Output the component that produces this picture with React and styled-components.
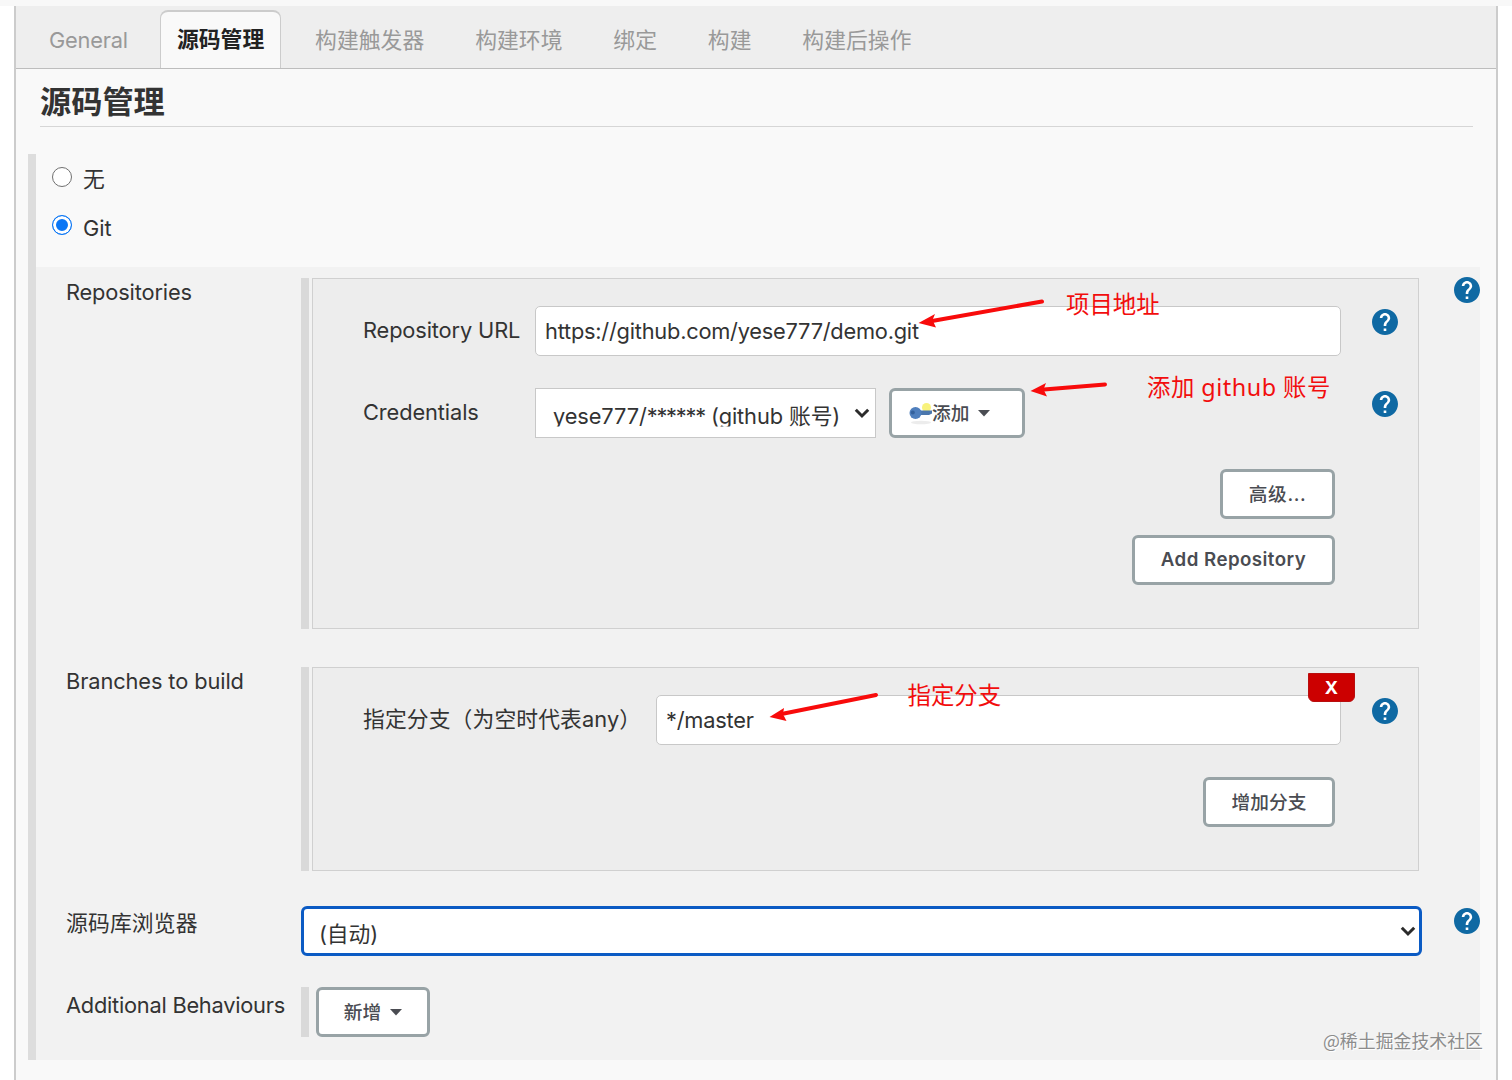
import React from 'react';
import styled, { createGlobalStyle } from 'styled-components';

const tabs = ['General', '源码管理', '构建触发器', '构建环境', '绑定', '构建', '构建后操作'];

const Help = ({ top }) => (
  <HelpIcon $top={top} viewBox="2 2 20 20">
    <circle cx="12" cy="12" r="9.6" fill="#fff" />
    <path
      fill="#0f69a3"
      d="M12 2C6.48 2 2 6.48 2 12s4.48 10 10 10 10-4.48 10-10S17.52 2 12 2zm1 17h-2v-2h2v2zm2.07-7.75l-.9.92C13.45 12.9 13 13.5 13 15h-2v-.5c0-1.1.45-2.1 1.17-2.83l1.24-1.26c.37-.36.59-.86.59-1.41 0-1.1-.9-2-2-2s-2 .9-2 2H8c0-2.21 1.79-4 4-4s4 1.79 4 4c0 .88-.36 1.68-.93 2.25z"
    />
  </HelpIcon>
);

const Chevron = () => (
  <svg width="16" height="11" viewBox="0 0 16 11">
    <path d="M1.8 1.8L8 8L14.2 1.8" fill="none" stroke="#2b2b2b" strokeWidth="3" />
  </svg>
);

const Caret = () => (
  <svg width="12" height="7" viewBox="0 0 12 7">
    <path d="M0 0H12L6 6.5Z" fill="#4a4c52" />
  </svg>
);

const KeyIcon = () => (
  <svg width="24" height="24" viewBox="0 0 24 24">
    <ellipse cx="13" cy="21.5" rx="10" ry="1.8" fill="#ececec" />
    <circle cx="18.5" cy="6.5" r="4.5" fill="#f8f27c" />
    <path d="M10 9.5L24 9.5V12.5L21 14H10Z" fill="#4b77ad" />
    <circle cx="7.5" cy="12" r="6" fill="#4f7fbd" />
    <circle cx="4.8" cy="11.5" r="2" fill="#34619c" />
  </svg>
);

const App = () => {
  return (
    <>
      <GlobalStyle />
      <Page>
        <Panel>
          <TabBar>
            {tabs.map((tab, i) => (
              <Tab key={tab} $active={i === 1} $latin={i === 0}>
                {tab}
              </Tab>
            ))}
          </TabBar>
          <Heading>源码管理</Heading>
          <Section>
            <RadioList>
              <RadioRow>
                <Radio />
                <RadioText>无</RadioText>
              </RadioRow>
              <RadioRow>
                <Radio $checked />
                <RadioText>Git</RadioText>
              </RadioRow>
            </RadioList>
            <GitOptions>
              <Row $height={351} $gap={38}>
                <Label $spacing={-0.15}>Repositories</Label>
                <Bar />
                <Box>
                  <Field $gap={32}>
                    <FieldLabel $width={172} $spacing={-0.13}>Repository URL</FieldLabel>
                    <Input>https://github.com/yese777/demo.git</Input>
                    <Help top={3} />
                  </Field>
                  <Field $gap={31}>
                    <FieldLabel $width={172} $spacing={-0.1}>Credentials</FieldLabel>
                    <Credentials>
                      <Select>
                        <SelectText $clipped>
                          yese777/<Stars>******</Stars> (github 账号)
                        </SelectText>
                        <Chevron />
                      </Select>
                      <Button $width={136} $padding={16}>
                        <KeyIcon />
                        <ButtonText>添加</ButtonText>
                        <Caret />
                      </Button>
                    </Credentials>
                    <Help top={3} />
                  </Field>
                  <Actions>
                    <Button $width={115}>
                      <ButtonText $spacing={0.6}>高级...</ButtonText>
                    </Button>
                    <Button $width={203}>
                      <ButtonText $latin $spacing={0.45}>Add Repository</ButtonText>
                    </Button>
                  </Actions>
                </Box>
                <Help top={-1} />
              </Row>
              <Row $height={204} $gap={35}>
                <Label $spacing={-0.1}>Branches to build</Label>
                <Bar />
                <Box>
                  <Delete>X</Delete>
                  <Field $gap={32}>
                    <FieldLabel $width={293} $spacing={0.1}>指定分支（为空时代表any）</FieldLabel>
                    <Input>*/master</Input>
                    <Help top={3} />
                  </Field>
                  <Actions>
                    <Button $width={132}>
                      <ButtonText $spacing={0.1}>增加分支</ButtonText>
                    </Button>
                  </Actions>
                </Box>
              </Row>
              <Row $height={50} $gap={31}>
                <Label $top={2} $spacing={0.15}>源码库浏览器</Label>
                <BrowserSelect>
                  <SelectText>(自动)</SelectText>
                  <Chevron />
                </BrowserSelect>
                <Help top={2} />
              </Row>
              <Row $height={50} $gap={0}>
                <Label $top={3} $spacing={-0.24}>Additional Behaviours</Label>
                <Bar />
                <Behaviour>
                  <Button $width={114}>
                    <ButtonText>新增</ButtonText>
                    <Caret />
                  </Button>
                </Behaviour>
              </Row>
            </GitOptions>
          </Section>
        </Panel>
        <Arrows viewBox="0 0 1512 1080">
          <g stroke="#f80b0b" strokeWidth="4" strokeLinecap="round">
            <path d="M932 321L1042 301.500" />
            <path d="M1044 389.500L1105 384.500" />
            <path d="M784 713.500L876 695" />
          </g>
          <g fill="#f80b0b">
            <path d="M918.500 323L935 314L932.500 320L936 327.500Z" />
            <path d="M1030.500 391L1046 383L1043.500 389.500L1047 396.500Z" />
            <path d="M769.500 717L784 708L783 714L786.500 721Z" />
          </g>
        </Arrows>
        <Note $left={1066} $top={288}>项目地址</Note>
        <Note $left={1147} $top={371} $spacing={0.5}>添加 github 账号</Note>
        <Note $left={907.5} $top={679}>指定分支</Note>
        <Watermark>@稀土掘金技术社区</Watermark>
      </Page>
    </>
  );
};

export default App;

const GlobalStyle = createGlobalStyle`
  * {
    box-sizing: border-box;
  }

  body {
    margin: 0;
    background-color: #fff;
    color: #333;
    font-family: Inter, "Noto Sans CJK SC", sans-serif;
    font-size: 21.8px;
    line-height: 30px;
  }
`;

const Page = styled.div`
  position: relative;
  width: 1512px;
  height: 1080px;
  overflow: hidden;
  border-top: 6px solid #f8f8f8;
`;

const Panel = styled.main`
  width: 1484px;
  height: 1074px;
  margin-left: 14px;
  border: solid #ccc;
  border-width: 0 2px;
  background-color: #f9f9f9;
`;

const TabBar = styled.nav`
  display: flex;
  align-items: flex-end;
  height: 63px;
  padding-left: 16px;
  border-bottom: 1px solid #bdbdbd;
  background-color: #eee;
`;

const Tab = styled.div`
  height: 58px;
  margin-right: ${({ $latin }) => ($latin ? 15 : 16.8)}px;
  padding: ${({ $active }) => ($active ? 12 : 13)}px 16px 0;
  border: solid ${({ $active }) => ($active ? '#ccc' : 'transparent')};
  border-width: 2px 1.5px 0;
  border-radius: 8px 8px 0 0;
  background-color: ${({ $active }) => ($active ? '#f9f9f9' : 'transparent')};
  color: ${({ $active }) => ($active ? '#222' : '#999')};
  font-weight: ${({ $active }) => ($active ? 700 : 400)};
  letter-spacing: ${({ $latin }) => ($latin ? -0.2 : 0.05)}px;
  white-space: nowrap;
`;

const Heading = styled.h1`
  height: 58px;
  margin: 0 23px 27px 24px;
  padding-top: 11px;
  border-bottom: 1px solid #d6d6d6;
  font-size: 31.2px;
  font-weight: 700;
  line-height: 44px;
`;

const Section = styled.section`
  width: 1452px;
  height: 906px;
  margin-left: 12px;
  border-left: 8px solid #ddd;
`;

const RadioList = styled.div`
  height: 113px;
  padding: 9px 0 0 16px;
`;

const RadioRow = styled.div`
  display: flex;
  gap: 11px;
  height: 48.5px;
`;

const Radio = styled.span`
  width: 20px;
  height: 20px;
  margin-top: 3.5px;
  border: 1.5px solid ${({ $checked }) => ($checked ? '#0a76f5' : '#707070')};
  border-radius: 50%;
  background-color: ${({ $checked }) => ($checked ? '#0a76f5' : '#fff')};
  box-shadow: inset 0 0 0 ${({ $checked }) => ($checked ? 3 : 0)}px #fff;
`;

const RadioText = styled.span`
  padding-top: 1px;
`;

const GitOptions = styled.div`
  height: 793px;
  padding: 11px 0 0 30px;
  background-color: #f2f2f2;
`;

const Row = styled.div`
  display: flex;
  height: ${({ $height }) => $height}px;
  margin-bottom: ${({ $gap }) => $gap}px;
`;

const Label = styled.div`
  flex: none;
  width: 235px;
  margin-top: ${({ $top = -1 }) => $top}px;
  letter-spacing: ${({ $spacing = 0 }) => $spacing}px;
  white-space: nowrap;
`;

const Bar = styled.div`
  flex: none;
  width: 8px;
  margin-right: 3px;
  background-color: #d9d9d9;
`;

const Box = styled.div`
  position: relative;
  width: 1107px;
  padding: 27px 20px 0 50px;
  border: 1.5px solid #d0d0d0;
  background-color: #ededed;
`;

const HelpIcon = styled.svg`
  flex: none;
  width: 26px;
  height: 26px;
  margin: ${({ $top }) => $top}px 0 0 auto;
`;

const Field = styled.div`
  display: flex;
  height: 50px;
  margin-bottom: ${({ $gap }) => $gap}px;
`;

const FieldLabel = styled.div`
  flex: none;
  width: ${({ $width }) => $width}px;
  padding-top: 9px;
  letter-spacing: ${({ $spacing = 0 }) => $spacing}px;
  white-space: nowrap;
`;

const Input = styled.div`
  flex: 1;
  margin-right: 31px;
  padding: 9px 9px;
  border: 1.5px solid #c8c8c8;
  border-radius: 5px;
  background-color: #fff;
  letter-spacing: -0.23px;
  white-space: nowrap;
`;

const Credentials = styled.div`
  display: flex;
  gap: 13px;
`;

const Select = styled.div`
  display: flex;
  justify-content: space-between;
  align-items: center;
  width: 341px;
  height: 50px;
  padding: 1px 5px 0 17px;
  border: 1.5px solid #c8c8c8;
  background-color: #fff;
`;

const SelectText = styled.span`
  height: 26px;
  clip-path: ${({ $clipped }) => ($clipped ? 'inset(0)' : 'none')};
  letter-spacing: -0.1px;
  white-space: nowrap;
`;

const Stars = styled.span`
  letter-spacing: -1.2px;
`;

const BrowserSelect = styled(Select)`
  width: 1121px;
  padding-right: 3px;
  padding-left: 15px;
  border: 3px solid #0b5bc4;
  border-radius: 6px;
`;

const Actions = styled.div`
  display: flex;
  flex-direction: column;
  align-items: flex-end;
  gap: 16px;
  padding-right: 63px;
`;

const Button = styled.button`
  display: flex;
  justify-content: ${({ $padding }) => ($padding ? 'flex-start' : 'center')};
  align-items: center;
  gap: 0;
  width: ${({ $width }) => $width}px;
  height: 50px;
  padding: 0 0 0 ${({ $padding = 0 }) => $padding}px;
  border: 3px solid #98a3a6;
  border-radius: 6px;
  background-color: #fff;
  color: #4a4c52;
  font-family: inherit;
  font-size: 18.7px;
`;

const ButtonText = styled.span`
  padding-bottom: ${({ $latin }) => ($latin ? 1 : 4)}px;
  font-weight: ${({ $latin }) => ($latin ? 600 : 500)};
  letter-spacing: ${({ $spacing = 0 }) => $spacing}px;
  white-space: nowrap;

  & + svg {
    margin-left: 9px;
  }
`;

const Delete = styled.div`
  position: absolute;
  top: 4.5px;
  right: 63px;
  width: 47px;
  height: 29px;
  border: 1px solid #b80f0f;
  border-radius: 0 0 6px 6px;
  background-color: #c00;
  color: #fff;
  font-size: 18px;
  font-weight: 700;
  line-height: 27px;
  text-align: center;
`;

const Behaviour = styled.div`
  margin-left: 4px;
`;

const Arrows = styled.svg`
  position: absolute;
  top: -6px;
  left: 0;
  width: 1512px;
  height: 1080px;
`;

const Note = styled.span`
  position: absolute;
  top: ${({ $top }) => $top - 6}px;
  left: ${({ $left }) => $left}px;
  color: #f20d0d;
  font-family: "Noto Sans", "Noto Sans CJK SC", sans-serif;
  font-size: 23.4px;
  letter-spacing: ${({ $spacing = 0 }) => $spacing}px;
  line-height: 32px;
  white-space: nowrap;
`;

const Watermark = styled.span`
  position: absolute;
  right: 29px;
  bottom: 26px;
  color: #8c8c8c;
  font-family: "Noto Sans CJK SC", sans-serif;
  font-size: 17.9px;
  line-height: 28px;
  text-shadow: 1px 1px 0 #fff;
`;
